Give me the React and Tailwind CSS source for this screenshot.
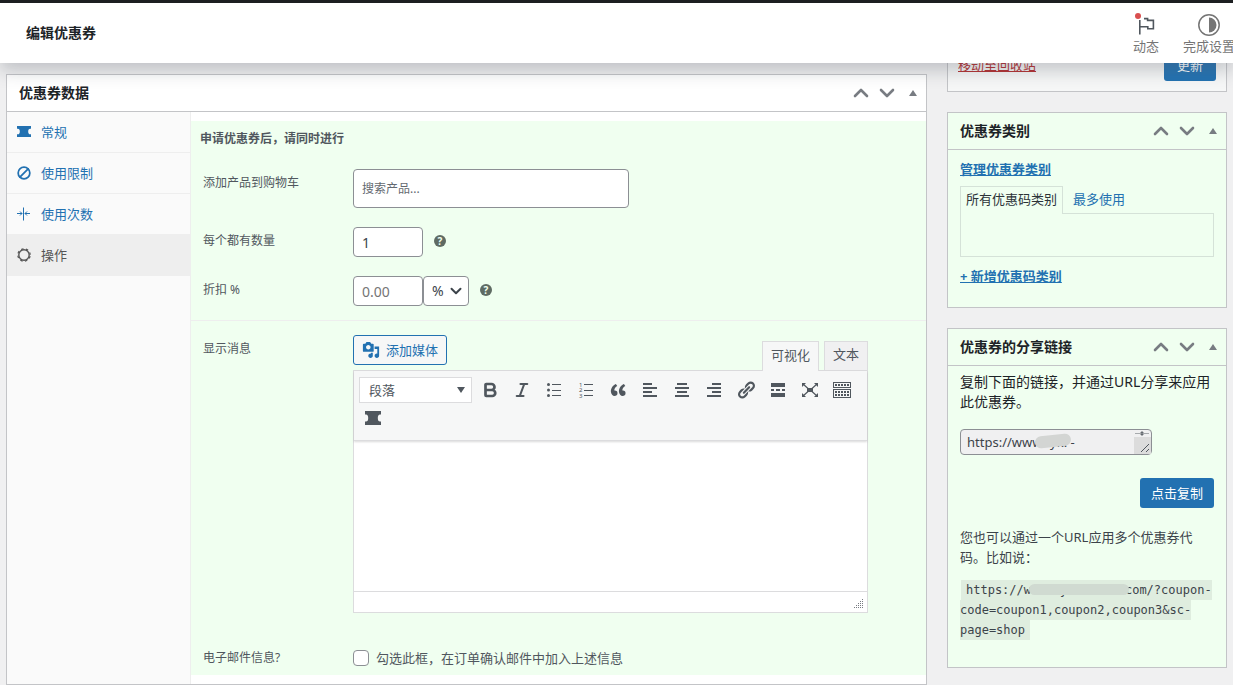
import { useState } from 'react';
import { Ban, Bold, ChevronDown, ChevronUp, Italic } from 'lucide-react';

const TicketIcon = ({ className }) => (
    <svg viewBox="0 0 16 14" preserveAspectRatio="none" className={className} fill="currentColor">
        <path d="M0 0H16V3.4H15A2.2 3.6 0 0 0 15 10.6H16V14H0V10.6H1A2.2 3.6 0 0 0 1 3.4H0Z" />
    </svg>
);

const LimitIcon = () => (
    <svg viewBox="0 0 14 14" className="w-3.5 h-3.5" fill="none" stroke="currentColor" strokeWidth="1">
        <path d="M6.500 0.500V13.500M0 6.500H5M3 4.500L5 6.500L3 8.500M13 6.500H8M10 4.500L8 6.500L10 8.500" />
    </svg>
);

const GearIcon = () => (
    <svg viewBox="0 0 14 14" className="w-3.5 h-3.5" fill="none" stroke="currentColor">
        <circle cx="7" cy="7" r="5.2" strokeWidth="1.4" />
        <circle cx="7" cy="7" r="6.2" strokeWidth="1.2" strokeDasharray="2.4 2.47" strokeDashoffset="-1.2" />
    </svg>
);

const MediaIcon = () => (
    <svg viewBox="0 0 20 20" className="w-[18px] h-[18px]" fill="currentColor">
        <path d="M13 11V4c0-.55-.45-1-1-1h-1.67L9 1H5L3.67 3H2c-.55 0-1 .45-1 1v7c0 .55.45 1 1 1h10c.55 0 1-.45 1-1zM7 4.5c1.38 0 2.5 1.12 2.5 2.5S8.38 9.5 7 9.5 4.5 8.38 4.5 7 5.62 4.5 7 4.5zM14 6h5v10.5c0 1.38-1.12 2.5-2.5 2.5S14 17.88 14 16.5s1.12-2.5 2.5-2.5c.17 0 .34.02.5.05V9h-3V6zm-4 8.05V13h2v3.5c0 1.38-1.12 2.5-2.5 2.5S7 17.88 7 16.5 8.12 14 9.5 14c.17 0 .34.02.5.05z" />
    </svg>
);

const FlagIcon = () => (
    <svg viewBox="0 0 18 20" className="w-[18px] h-5" fill="none" stroke="currentColor" strokeWidth="1.6">
        <path d="M2.8 5V19.5M7 3.6H10.6V5.4H16.4V13.8H10.8V11.8H2.8" />
    </svg>
);

const HalfCircleIcon = () => (
    <svg viewBox="0 0 24 24" className="w-6 h-6">
        <circle cx="12" cy="12" r="10.2" fill="none" stroke="currentColor" strokeWidth="1.5" />
        <path d="M12 4.5A7.5 7.5 0 0 1 12 19.5Z" fill="currentColor" />
    </svg>
);

// 20x20 toolbar glyphs
const Glyph = ({ children }) => (
    <svg viewBox="0 0 20 20" className="w-5 h-5" fill="currentColor">{children}</svg>
);

const tools = [
    { name: '粗体', icon: <Bold size={18} strokeWidth={3.6} /> },
    { name: '斜体', icon: <Italic size={18} strokeWidth={2.8} /> },
    {
        name: '项目符号列表',
        icon: (
            <Glyph>
                <circle cx="4.5" cy="4.5" r="1.5" /><circle cx="4.5" cy="10" r="1.5" /><circle cx="4.5" cy="15.5" r="1.5" />
                <path d="M8 4h9v1H8zM8 10h9v1H8zM8 15h9v1H8z" />
            </Glyph>
        ),
    },
    {
        name: '编号列表',
        icon: (
            <Glyph>
                <text x="3" y="6.5" fontSize="6">1</text><text x="3" y="12.2" fontSize="6">2</text><text x="3" y="18" fontSize="6">3</text>
                <path d="M8 4h9v1H8zM8 10h9v1H8zM8 15h9v1H8z" />
            </Glyph>
        ),
    },
    {
        name: '段落引用',
        icon: (
            <Glyph>
                <path d="M9.49 13.22c0-.74-.2-1.38-.61-1.9-.62-.78-1.83-.88-2.53-.72-.29-1.65 1.11-3.75 2.92-4.65L7.88 4c-2.73 1.3-5.42 4.28-4.96 8.05C3.21 14.43 4.59 16 6.54 16c.85 0 1.56-.25 2.12-.75s.83-1.18.83-2.03zm8.05 0c0-.74-.2-1.38-.61-1.9-.63-.78-1.83-.88-2.53-.72-.29-1.65 1.11-3.75 2.92-4.65L15.93 4c-2.73 1.3-5.41 4.28-4.95 8.05.29 2.38 1.66 3.95 3.61 3.95.85 0 1.56-.25 2.12-.75s.83-1.18.83-2.03z" />
            </Glyph>
        ),
    },
    { name: '左对齐', icon: <Glyph><path d="M3 3h9v2H3zM3 7h14v2H3zM3 11h9v2H3zM3 15h14v2H3z" /></Glyph> },
    { name: '居中对齐', icon: <Glyph><path d="M5 3h10v2H5zM3 7h14v2H3zM5 11h10v2H5zM3 15h14v2H3z" /></Glyph> },
    { name: '右对齐', icon: <Glyph><path d="M8 3h9v2H8zM3 7h14v2H3zM8 11h9v2H8zM3 15h14v2H3z" /></Glyph> },
    {
        name: '插入链接',
        icon: (
            <Glyph>
                <path d="M17.74 2.76c1.68 1.69 1.68 4.41 0 6.1l-1.53 1.52c-1.12 1.12-2.7 1.47-4.14 1.09l2.62-2.61.76-.77.76-.76c.84-.84.84-2.2 0-3.04-.84-.85-2.2-.85-3.04 0l-.77.76-3.38 3.38c-.37-1.44-.02-3.02 1.1-4.14l1.52-1.53c1.69-1.68 4.42-1.68 6.1 0zM8.59 13.43l5.34-5.34c.42-.42.42-1.1 0-1.52-.44-.43-1.13-.39-1.53 0l-5.33 5.34c-.42.42-.42 1.1 0 1.52.44.43 1.13.39 1.52 0zm-.76 2.29l4.14-4.15c.38 1.44.03 3.02-1.09 4.14l-1.52 1.53c-1.69 1.68-4.41 1.68-6.1 0-1.68-1.68-1.68-4.42 0-6.1l1.53-1.52c1.12-1.12 2.7-1.47 4.14-1.1l-4.14 4.15c-.85.84-.85 2.2 0 3.05.84.84 2.2.84 3.04 0z" />
            </Glyph>
        ),
    },
    { name: '插入More标签', icon: <Glyph><path d="M17 7V3H3v4h14zM6 11V9H3v2h3zm6 0V9H8v2h4zm5 0V9h-3v2h3zm0 6v-4H3v4h14z" /></Glyph> },
    {
        name: '全屏',
        icon: (
            <Glyph>
                <path d="M7 8h6v4H7zM2 3h4L2 7zM18 3v4l-4-4zM2 17v-4l4 4zM18 17h-4l4-4z" />
                <path d="M3 4L8 8.5M17 4L12 8.5M3 16L8 11.5M17 16L12 11.5" stroke="currentColor" strokeWidth="1.2" />
            </Glyph>
        ),
    },
    {
        name: '工具栏开关',
        icon: (
            <Glyph>
                <path d="M1 2h18v6H1zM2 3v4h16V3zM1 9h18v9H1zM2 10v7h16v-7z" fillRule="evenodd" />
                <path d="M3 5H17M3 12H17M3 15H17" stroke="currentColor" strokeWidth="2" strokeDasharray="2 1" />
            </Glyph>
        ),
    },
    { name: '优惠券', icon: <TicketIcon className="w-4 h-3.5" /> },
];

const tabs = [
    { name: '常规', icon: <TicketIcon className="w-3.5 h-[11px]" /> },
    { name: '使用限制', icon: <Ban size={14} strokeWidth={3} className="-scale-x-100" /> },
    { name: '使用次数', icon: <LimitIcon /> },
    { name: '操作', icon: <GearIcon /> },
];

const BoxHeader = ({ title }) => (
    <div className="flex items-center justify-between h-[37px] border-b border-[#c3c4c7] pl-3">
        <h2 className="text-sm leading-5 font-bold text-[#1d2327]">{title}</h2>
        <div className="flex text-[#787c82]">
            <button type="button" aria-label="上移" className="w-[26px] h-9 flex items-center justify-center"><ChevronUp size={24} strokeWidth={2.6} className="shrink-0" /></button>
            <button type="button" aria-label="下移" className="w-[26px] h-9 flex items-center justify-center"><ChevronDown size={24} strokeWidth={2.6} className="shrink-0" /></button>
            <button type="button" aria-label="切换面板" className="w-[26px] h-9 flex items-center justify-center">
                <svg viewBox="0 0 8 6" className="w-2 h-1.5" fill="currentColor"><path d="M4 0L8 6H0Z" /></svg>
            </button>
        </div>
    </div>
);

const Help = () => (
    <span className="ml-[11px] mb-0.5 w-3 h-3 rounded-full bg-[#5f6b63] text-[#f0fff0] text-[10px] leading-3 font-bold text-center">?</span>
);

const inputClass = 'border border-[#8c8f94] rounded bg-white px-2 outline-none';
const labelClass = 'pt-0.5 text-xs leading-6 text-[#50575e]';

const App = () => {
    const [active, setActive] = useState('操作');
    const [quantity, setQuantity] = useState('1');
    const [emailMessage, setEmailMessage] = useState(false);

    return (
        <div className="min-h-screen overflow-hidden bg-[#f0f0f1] font-['Noto_Sans','Noto_Sans_CJK_SC',sans-serif] text-[13px] leading-5 text-[#3c434a]">
            <header className="relative z-10 flex items-center justify-between border-t-3 border-[#1d1f21] bg-white h-[63px] pl-[26px] shadow-[0_8px_16px_0_rgba(85,93,102,0.3)]">
                <h1 className="text-sm font-bold text-[#1d2327]">编辑优惠券</h1>
                <div className="flex gap-6 pt-0.5 -mr-0.5 leading-[18px] text-[#757575]">
                    <button type="button" className="relative flex flex-col items-center">
                        <span className="h-6 flex items-center text-[#50575e]"><FlagIcon /></span>
                        <span className="whitespace-nowrap">动态</span>
                        <span className="absolute left-0.5 top-0 w-1.5 h-1.5 rounded-full bg-[#d94f4f]" />
                    </button>
                    <button type="button" className="flex flex-col items-center">
                        <HalfCircleIcon />
                        <span className="whitespace-nowrap">完成设置</span>
                    </button>
                </div>
            </header>

            <main className="flex items-start gap-5 px-1.5 pt-[11px]">
                <section className="flex-1 min-w-0 bg-white border border-[#c3c4c7]">
                    <BoxHeader title="优惠券数据" />
                    <div className="flex">
                        <nav className="w-[184px] shrink-0 bg-[#fafafa] border-r border-[#eee]">
                            {tabs.map((tab) => (
                                <a
                                    key={tab.name}
                                    href="#"
                                    onClick={() => setActive(tab.name)}
                                    className={`flex items-center gap-2.5 h-[41px] pl-2.5 pb-px border-b border-[#eee] ${active === tab.name ? 'bg-[#eee] text-[#555]' : 'text-[#2271b1]'}`}
                                >
                                    {tab.icon}
                                    {tab.name}
                                </a>
                            ))}
                        </nav>

                        <div className="flex-1 min-w-0 py-[9px]">
                            <div className="bg-[#f0fff0] pt-1.5 pb-3.5 text-xs">
                                <h3 className="pl-[9px] leading-6 font-bold text-[#50575e]">申请优惠券后，请同时进行</h3>
                                <div className="grid grid-cols-[150px_1fr] gap-y-[19px] mt-[18px] pl-3">
                                    <label htmlFor="products" className={labelClass}>添加产品到购物车</label>
                                    <div className="flex">
                                        <input id="products" placeholder="搜索产品..." className={`${inputClass} w-[276px] h-[39px] placeholder:text-[#646970]`} />
                                    </div>
                                    <label htmlFor="quantity" className={labelClass}>每个都有数量</label>
                                    <div className="flex items-center">
                                        <input id="quantity" value={quantity} onChange={(e) => setQuantity(e.target.value)} className={`${inputClass} w-[70px] h-[30px] text-sm`} />
                                        <Help />
                                    </div>
                                    <label htmlFor="discount" className={labelClass}>折扣 %</label>
                                    <div className="flex items-center">
                                        <input id="discount" placeholder="0.00" className={`${inputClass} w-[70px] h-[30px] text-sm placeholder:text-[#757575]`} />
                                        <div className="relative">
                                            <select aria-label="折扣类型" className={`${inputClass} block appearance-none w-[46px] h-[30px] text-sm`}>
                                                <option>%</option>
                                                <option>¥</option>
                                            </select>
                                            <ChevronDown size={18} strokeWidth={2.6} className="absolute right-1 top-1.5 pointer-events-none" />
                                        </div>
                                        <Help />
                                    </div>
                                </div>
                            </div>

                            <div className="bg-[#f0fff0] border-t border-[#eee] pt-3.5 pb-[5px] pl-3">
                                <div className="grid grid-cols-[150px_minmax(0,515px)]">
                                    <label htmlFor="message" className={labelClass}>显示消息</label>
                                    <div>
                                        <div className="flex justify-between h-[35px]">
                                            <button type="button" className="flex items-center gap-1.5 h-[30px] px-2 border border-[#2271b1] rounded-[3px] bg-[#f6f7f7] text-[#2271b1] whitespace-nowrap">
                                                <MediaIcon />
                                                添加媒体
                                            </button>
                                            <div className="flex items-end gap-[5px] text-[#50575e]">
                                                <button type="button" className="relative z-10 -mb-px h-[30px] px-2 pb-1 border border-b-0 border-[#dcdcde] bg-[#f6f7f7]">可视化</button>
                                                <button type="button" className="h-[29px] px-2 pb-1 border border-b-0 border-[#dcdcde] bg-[#f0f0f1]">文本</button>
                                            </div>
                                        </div>
                                        <div className="border border-[#dcdcde] bg-white">
                                            <div className="flex flex-wrap gap-x-1 px-[5px] pt-[5px] pb-2 bg-[#f6f7f7] border-b border-[#dcdcde] shadow-[0_1px_2px_rgba(0,0,0,0.15)] text-[#50575e]">
                                                <div className="relative flex items-center h-7">
                                                    <select aria-label="段落格式" className="appearance-none w-[113px] h-[26px] pl-[9px] border border-[#dcdcde] bg-white outline-none">
                                                        <option>段落</option>
                                                        <option>标题1</option>
                                                    </select>
                                                    <svg viewBox="0 0 8 6" className="absolute right-[7px] top-[11px] w-2 h-1.5 pointer-events-none" fill="currentColor"><path d="M0 0H8L4 6Z" /></svg>
                                                </div>
                                                {tools.map((tool) => (
                                                    <button key={tool.name} type="button" aria-label={tool.name} className="w-7 h-7 flex items-center justify-center">
                                                        {tool.icon}
                                                    </button>
                                                ))}
                                            </div>
                                            <textarea id="message" className="block w-full h-[150px] p-2 resize-none outline-none" />
                                            <div className="flex items-end justify-end h-[21px] p-[3px] border-t border-[#dcdcde]">
                                                <svg viewBox="0 0 10 10" className="w-2.5 h-2.5" fill="#787c82">
                                                    <path d="M8 0h1v1h-1zM6 2h1v1h-1zM8 2h1v1h-1zM4 4h1v1h-1zM6 4h1v1h-1zM8 4h1v1h-1zM2 6h1v1h-1zM4 6h1v1h-1zM6 6h1v1h-1zM8 6h1v1h-1zM0 8h1v1h-1zM2 8h1v1h-1zM4 8h1v1h-1zM6 8h1v1h-1zM8 8h1v1h-1z" />
                                                </svg>
                                            </div>
                                        </div>
                                    </div>
                                </div>
                                <div className="grid grid-cols-[150px_1fr] mt-[33px]">
                                    <span className="text-xs leading-6 text-[#50575e]">电子邮件信息?</span>
                                    <label className="flex items-center gap-[7px] leading-6 text-[#50575e]">
                                        <input
                                            type="checkbox"
                                            checked={emailMessage}
                                            onChange={(e) => setEmailMessage(e.target.checked)}
                                            className="appearance-none w-4 h-4 border border-[#8c8f94] rounded bg-white checked:bg-[#2271b1]"
                                        />
                                        勾选此框，在订单确认邮件中加入上述信息
                                    </label>
                                </div>
                            </div>
                        </div>
                    </div>
                </section>

                <aside className="w-[280px] shrink-0 flex flex-col gap-5 -mt-[34px]">
                    <section className="flex items-center justify-between p-2.5 bg-[#f6f7f7] border border-[#c3c4c7]">
                        <a href="#" className="pb-0.5 text-[#b32d2e] underline">移动至回收站</a>
                        <button type="button" className="h-[30px] px-[13px] pb-0.5 rounded-[3px] bg-[#2271b1] text-white whitespace-nowrap">更新</button>
                    </section>

                    <section className="bg-[#f0fff0] border border-[#c3c4c7]">
                        <BoxHeader title="优惠券类别" />
                        <div className="px-3 pt-[9px] pb-[21px]">
                            <a href="#" className="block w-fit font-bold text-[#2271b1] underline">管理优惠券类别</a>
                            <div className="flex mt-[7px]">
                                <button type="button" className="relative z-10 -mb-px h-7 px-[5px] pb-1 border border-b-0 border-[#d5e2d8] bg-[#f0fff0] text-[#2c3338]">所有优惠码类别</button>
                                <button type="button" className="h-[27px] px-2.5 pb-0.5 text-[#2271b1]">最多使用</button>
                            </div>
                            <div className="h-11 border border-[#d5e2d8]" />
                            <a href="#" className="block w-fit mt-[9px] font-bold text-[#2271b1] underline">+ 新增优惠码类别</a>
                        </div>
                    </section>

                    <section className="bg-[#f0fff0] border border-[#c3c4c7]">
                        <BoxHeader title="优惠券的分享链接" />
                        <div className="px-3 pt-1.5 pb-[27px]">
                            <p className="text-sm leading-5 text-[#1d2327]">复制下面的链接，并通过URL分享来应用此优惠券。</p>
                            <div className="relative w-48 mt-[17px]">
                                <textarea
                                    readOnly
                                    rows={1}
                                    aria-label="分享链接"
                                    defaultValue={'https://www.tyk.\u00a0-'}
                                    className="block w-full h-[26px] px-1.5 py-0.5 border border-[#8c8f94] rounded bg-[#f0f0f1] leading-5 resize-none overflow-hidden outline-none"
                                />
                                <span className="absolute left-[75px] top-1.5 w-9 h-3 rounded-full bg-[#d3d5d3] -rotate-6" />
                                <svg viewBox="0 0 17 24" className="absolute right-px top-px w-[17px] h-6" fill="none" stroke="#50575e">
                                    <path d="M0 7H17V24H0Z" fill="#dcdcdc" stroke="none" />
                                    <path d="M1 3.500H15" stroke="#a7aaad" />
                                    <path d="M8 1V6M6.500 2.500H9.500M6.500 4.500H9.500" strokeWidth="0.800" />
                                    <path d="M7 22L15 14M12 22L15 19" />
                                </svg>
                            </div>
                            <div className="flex justify-end mt-[23px]">
                                <button type="button" className="h-[30px] px-[11px] rounded-[3px] bg-[#2271b1] text-white">点击复制</button>
                            </div>
                            <p className="mt-[19px]">您也可以通过一个URL应用多个优惠券代码。比如说：</p>
                            <p className="relative mt-[13px] text-xs leading-5 font-['DejaVu_Sans_Mono',monospace]">
                                <code className="mx-px px-[5px] py-[3px] bg-black/7 font-['DejaVu_Sans_Mono',monospace]">
                                    {`https://www.ty${'\u00a0'.repeat(8)}com/?coupon-code=coupon1,coupon2,coupon3&sc-page=shop`}
                                </code>
                                <span className="absolute left-[69px] top-1 w-[100px] h-[11px] rounded-full bg-[#d0dad1]" />
                            </p>
                        </div>
                    </section>
                </aside>
            </main>
        </div>
    );
};

export default App;
